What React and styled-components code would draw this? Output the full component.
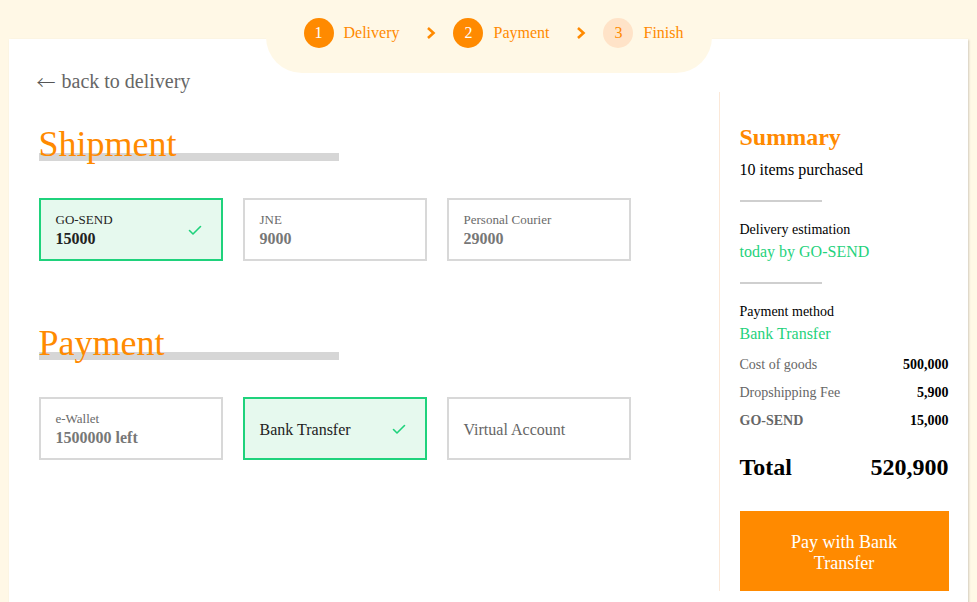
import React from "react";
import styled, { createGlobalStyle } from "styled-components";

const GlobalStyle = createGlobalStyle`
    html, body {
        margin: 0;
        padding: 0;
        background: #fff8e6;
        font-family: "Liberation Serif", "Times New Roman", serif;
    }
`

const ORANGE = "#ff8a00";
const GREEN = "#1fd27c";

const shipments = [
    { label: "GO-SEND", value: "15000", active: true },
    { label: "JNE", value: "9000" },
    { label: "Personal Courier", value: "29000" },
];

const payments = [
    { label: "e-Wallet", value: "1500000 left" },
    { title: "Bank Transfer", active: true },
    { title: "Virtual Account" },
];

const costs = [
    { name: "Cost of goods", amount: "500,000" },
    { name: "Dropshipping Fee", amount: "5,900" },
    { name: "GO-SEND", amount: "15,000", strong: true },
];

function Check() {
    return (
        <svg width="16" height="16" viewBox="0 0 16 16" fill="none">
            <polyline points="2.5 8.5 6 12 13.5 4.5" stroke={GREEN} strokeWidth="1.6" strokeLinecap="round" strokeLinejoin="round" />
        </svg>
    );
}

function Chevron() {
    return (
        <svg width="12" height="14" viewBox="0 0 12 14" fill="none">
            <polyline points="3 2 8.5 7 3 12" stroke={ORANGE} strokeWidth="2.6" strokeLinejoin="miter" />
        </svg>
    );
}

function Step({ num, label, done, last }) {
    return (
        <>
            <StepItem>
                <Circle done={done}>{num}</Circle>
                <StepLabel>{label}</StepLabel>
            </StepItem>
            {!last && <Separator><Chevron /></Separator>}
        </>
    );
}

function Option({ item }) {
    return (
        <Card active={item.active}>
            {item.title ? (
                <CardTitle active={item.active}>{item.title}</CardTitle>
            ) : (
                <div>
                    <CardLabel active={item.active}>{item.label}</CardLabel>
                    <CardValue active={item.active}>{item.value}</CardValue>
                </div>
            )}
            {item.active && <Check />}
        </Card>
    );
}

export default function App() {
    return (
        <Page>
            <GlobalStyle />
            <Stepper>
                <Step num="1" label="Delivery" done />
                <Step num="2" label="Payment" done />
                <Step num="3" label="Finish" last />
            </Stepper>
            <Panel>
                <Main>
                    <BackLink><Arrow>←</Arrow>back to delivery</BackLink>
                    <Heading>Shipment</Heading>
                    <Options>
                        {shipments.map((s) => <Option key={s.label} item={s} />)}
                    </Options>
                    <Heading spaced>Payment</Heading>
                    <Options>
                        {payments.map((p) => <Option key={p.label || p.title} item={p} />)}
                    </Options>
                </Main>
                <Summary>
                    <SummaryTitle>Summary</SummaryTitle>
                    <ItemCount>10 items purchased</ItemCount>
                    <Divider />
                    <Small>Delivery estimation</Small>
                    <Highlight>today by GO-SEND</Highlight>
                    <Divider />
                    <Small>Payment method</Small>
                    <Highlight>Bank Transfer</Highlight>
                    <CostList>
                        {costs.map((c) => (
                            <CostRow key={c.name}>
                                <CostName strong={c.strong}>{c.name}</CostName>
                                <CostAmount>{c.amount}</CostAmount>
                            </CostRow>
                        ))}
                    </CostList>
                    <TotalRow>
                        <span>Total</span>
                        <span>520,900</span>
                    </TotalRow>
                    <PayButton>Pay with Bank Transfer</PayButton>
                </Summary>
            </Panel>
        </Page>
    );
}

const Page = styled.div`
    min-height: 602px;
    display: flex;
    flex-direction: column;
    align-items: center;
    overflow: hidden;
`

const Stepper = styled.div`
    position: relative;
    z-index: 2;
    width: 446px;
    height: 73px;
    box-sizing: border-box;
    padding: 0 28px 8px 38px;
    background: #fff8e6;
    border-radius: 0 0 36px 36px;
    display: flex;
    align-items: center;
    margin-bottom: -34px;
`

const StepItem = styled.div`
    display: flex;
    align-items: center;
    gap: 10px;
`

const Circle = styled.div`
    width: 30px;
    height: 30px;
    border-radius: 50%;
    background: ${(p) => (p.done ? ORANGE : "#ffe3c8")};
    color: ${(p) => (p.done ? "#fff" : ORANGE)};
    font-size: 16px;
    display: flex;
    align-items: center;
    justify-content: center;
`

const StepLabel = styled.span`
    color: ${ORANGE};
    font-size: 16px;
`

const Separator = styled.div`
    display: flex;
    align-items: center;
    margin: 0 16px 0 26px;
`

const Panel = styled.div`
    position: relative;
    z-index: 1;
    width: 959px;
    margin-right: 1px;
    min-height: 600px;
    background: #fff;
    box-shadow: 1px 1px 2px rgba(0, 0, 0, 0.18);
    display: flex;
    align-items: flex-start;
`

const Main = styled.div`
    flex: 1;
    padding: 31px 0 0 30px;
`

const BackLink = styled.div`
    display: flex;
    align-items: center;
    font-size: 20px;
    color: #666;
    margin-left: -2px;
    line-height: 23px;
`

const Arrow = styled.span`
    font-family: "Noto Sans CJK JP", "DejaVu Sans", sans-serif;
    font-weight: 300;
    font-size: 19px;
    margin-right: 6px;
    color: #555;
`

const Heading = styled.h2`
    margin: ${(p) => (p.spaced ? "66px" : "35px")} 0 0;
    width: 300px;
    font-size: 36px;
    font-weight: normal;
    line-height: 33px;
    color: ${ORANGE};
    background: linear-gradient(#d6d6d6, #d6d6d6) no-repeat left bottom / 100% 8px;
`

const Options = styled.div`
    display: flex;
    gap: 20px;
    margin-top: 37px;
`

const Card = styled.div`
    width: 184px;
    height: 63px;
    box-sizing: border-box;
    padding: 0 18px 0 15px;
    border: 2px solid ${(p) => (p.active ? GREEN : "#d8d8d8")};
    background: ${(p) => (p.active ? "#e6f9ee" : "#fff")};
    display: flex;
    align-items: center;
    justify-content: space-between;
`

const CardLabel = styled.div`
    font-size: 13px;
    line-height: 15px;
    margin-bottom: 2px;
    color: ${(p) => (p.active ? "#222" : "#6a6a6a")};
`

const CardValue = styled.div`
    font-size: 16px;
    line-height: 19px;
    font-weight: bold;
    color: ${(p) => (p.active ? "#222" : "#777")};
`

const CardTitle = styled.div`
    font-size: 16px;
    padding-top: 2px;
    color: ${(p) => (p.active ? "#222" : "#666")};
`

const Summary = styled.div`
    flex: 0 0 209px;
    margin-top: 53px;
    padding: 31px 19px 0 20px;
    border-left: 1px solid #fbe8d8;
`

const SummaryTitle = styled.div`
    font-size: 24px;
    line-height: 28px;
    font-weight: bold;
    color: ${ORANGE};
`

const Small = styled.div`
    font-size: 14px;
    line-height: 16px;
    color: #000;
`

const ItemCount = styled.div`
    font-size: 16px;
    line-height: 18px;
    color: #000;
    margin-top: 10px;
`

const Divider = styled.div`
    width: 82px;
    height: 2px;
    background: #cfcfcf;
    margin: 21px 0 20px;
`

const Highlight = styled.div`
    font-size: 16px;
    line-height: 18px;
    color: ${GREEN};
    margin-top: 5px;
`

const CostList = styled.div`
    display: flex;
    flex-direction: column;
    gap: 12px;
    margin-top: 14px;
`

const CostRow = styled.div`
    display: flex;
    justify-content: space-between;
    font-size: 14px;
    line-height: 16px;
`

const CostName = styled.span`
    color: #666;
    font-weight: ${(p) => (p.strong ? "bold" : "normal")};
`

const CostAmount = styled.span`
    font-weight: bold;
    color: #000;
`

const TotalRow = styled.div`
    display: flex;
    justify-content: space-between;
    font-size: 24px;
    line-height: 28px;
    font-weight: bold;
    color: #000;
    margin-top: 24px;
`

const PayButton = styled.button`
    display: block;
    width: 100%;
    height: 80px;
    margin-top: 30px;
    padding: 4px 30px 0;
    border: none;
    background: ${ORANGE};
    color: #fff;
    font-family: inherit;
    font-size: 18px;
    line-height: 21px;
    cursor: pointer;
`
